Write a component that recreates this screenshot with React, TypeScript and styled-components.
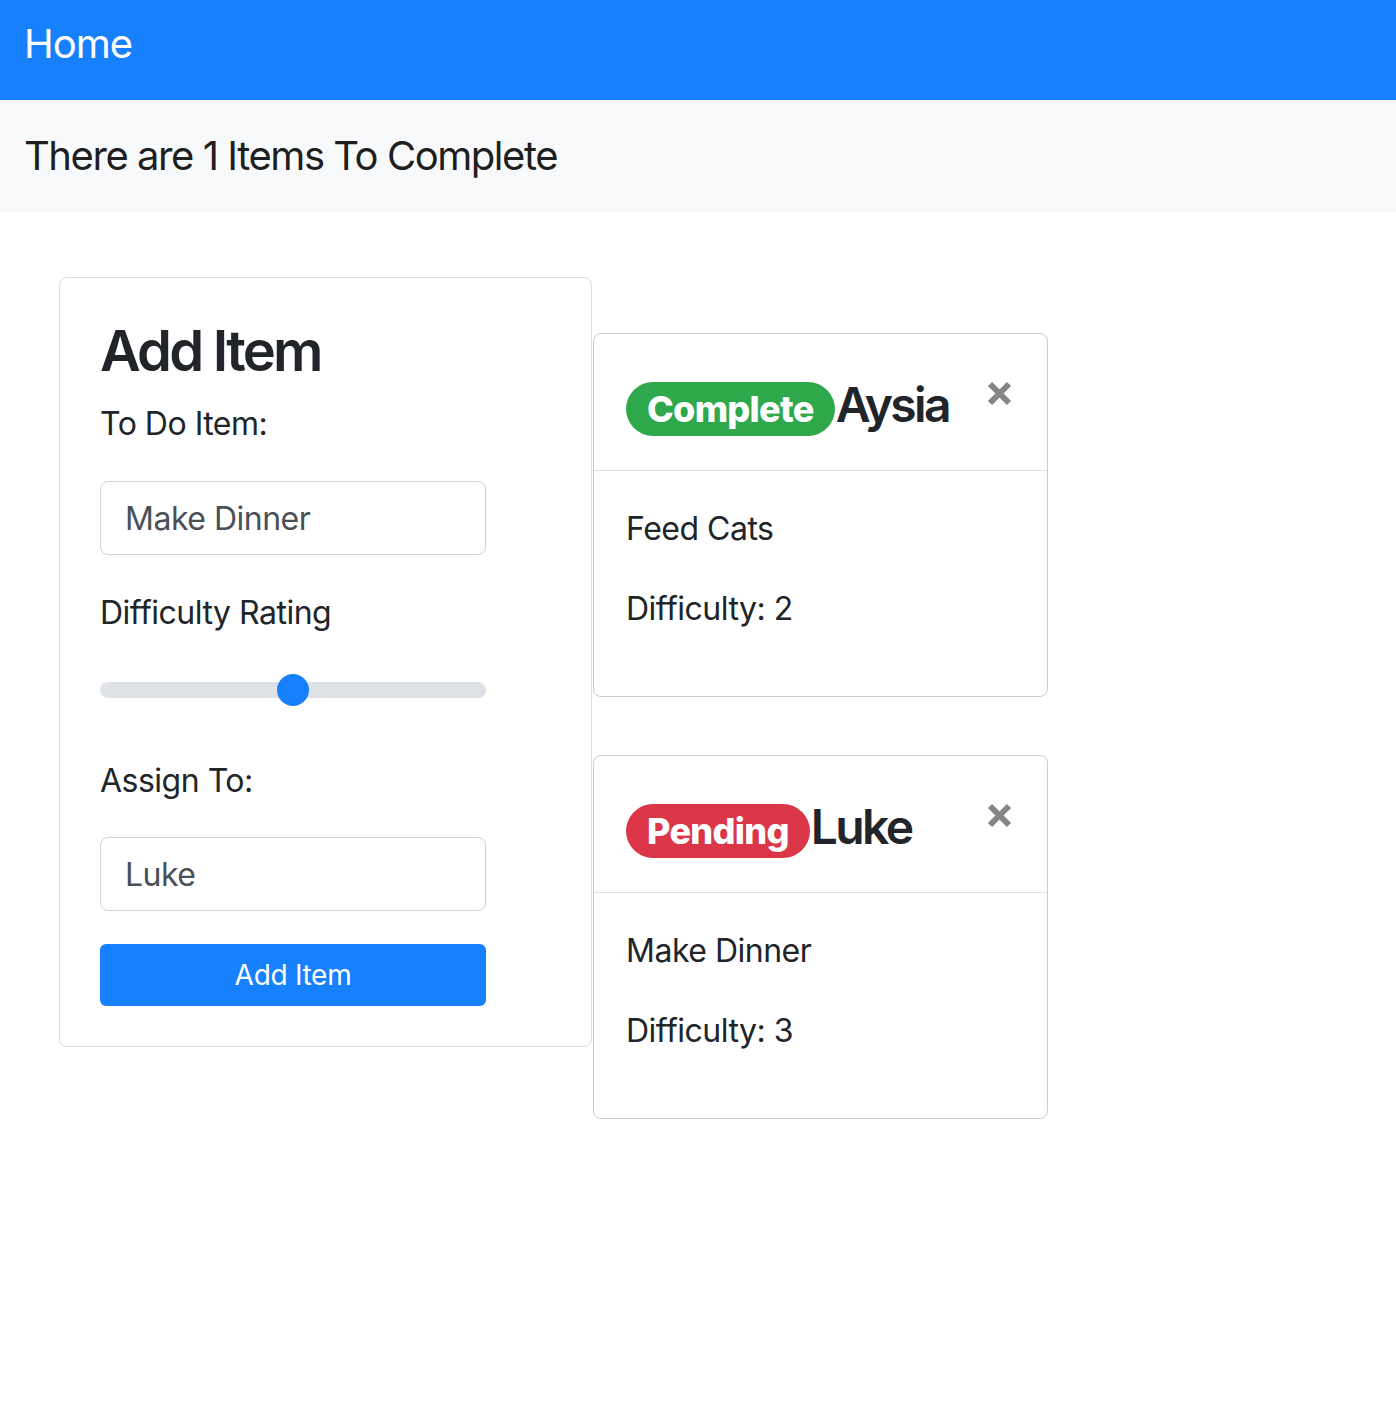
import React from "react";
import styled, { createGlobalStyle } from "styled-components";

const Global = createGlobalStyle`
  html, body { margin: 0; padding: 0; background: #fff; }
  body {
    font-family: Inter, "Noto Sans", "Liberation Sans", sans-serif;
    color: #212529;
    font-size: 32px;
    line-height: 1.5;
  }
  * { box-sizing: border-box; }
`;

const NavBar = styled.header`
  height: 100px;
  background: #1780fd;
  display: flex;
  align-items: center;
  padding: 0 24px;
`;

const Brand = styled.a`
  color: #fff;
  font-size: 40px;
  line-height: 1;
  letter-spacing: -1px;
  text-decoration: none;
  margin-top: -13px;
`;

const StatusBar = styled.div`
  height: 112px;
  background: #f8f9fa;
  display: flex;
  align-items: center;
  padding: 0 24px;
`;

const StatusText = styled.span`
  font-size: 40px;
  line-height: 1;
  letter-spacing: -1.45px;
  color: rgba(0, 0, 0, 0.9);
`;

const Main = styled.main`
  display: flex;
  align-items: flex-start;
  padding: 65px 0 0 59px;
`;

const FormCard = styled.section`
  width: 533px;
  border: 1px solid #dcdcdc;
  border-radius: 8px;
  padding: 40px;
  display: flex;
  flex-direction: column;
`;

const Heading = styled.h3`
  margin: 0 0 15px;
  font-size: 56px;
  font-weight: 600;
  line-height: 1.2;
  letter-spacing: -2.8px;
`;

const Label = styled.label<{ $gap?: number }>`
  display: block;
  font-size: 32px;
  line-height: 48px;
  letter-spacing: -0.5px;
  margin-bottom: ${(p) => p.$gap ?? 33}px;
`;

const TextInput = styled.input<{ $gap?: number }>`
  width: 386px;
  height: 74px;
  padding: 0 24px;
  border: 1px solid #ced4da;
  border-radius: 8px;
  font-family: inherit;
  font-size: 32px;
  letter-spacing: -0.5px;
  color: #495057;
  background: #fff;
  outline: none;
  margin-bottom: ${(p) => p.$gap ?? 0}px;
`;

const Range = styled.input`
  -webkit-appearance: none;
  appearance: none;
  width: 386px;
  height: 48px;
  margin: 29px 0 43px;
  padding: 0;
  background: transparent;
  outline: none;

  &::-webkit-slider-runnable-track {
    height: 16px;
    background: #dee2e6;
    border-radius: 16px;
  }
  &::-webkit-slider-thumb {
    -webkit-appearance: none;
    appearance: none;
    width: 32px;
    height: 32px;
    margin-top: -8px;
    border-radius: 50%;
    background: #1780fd;
    border: 0;
  }
`;

const SubmitButton = styled.button`
  width: 386px;
  height: 62px;
  border: 0;
  border-radius: 6px;
  background: #1780fd;
  color: #fff;
  font-family: inherit;
  font-size: 28px;
  letter-spacing: -0.3px;
  display: flex;
  align-items: center;
  justify-content: center;
`;

const List = styled.div`
  display: flex;
  flex-direction: column;
  gap: 58px;
  padding-top: 56px;
  margin-left: 1px;
`;

const ItemCard = styled.article`
  width: 455px;
  border: 1px solid #cccccc;
  border-radius: 8px;
  overflow: hidden;
`;

const CardHeader = styled.div`
  display: flex;
  justify-content: space-between;
  align-items: flex-start;
  padding: 47px 35px 35px 32px;
  border-bottom: 1px solid #dee2e6;
`;

const Title = styled.div`
  display: flex;
  align-items: baseline;
  height: 54px;
`;

const Badge = styled.span<{ $color: string }>`
  display: inline-block;
  background: ${(p) => p.$color};
  color: #fff;
  font-size: 36px;
  font-weight: 800;
  line-height: 1;
  letter-spacing: -0.7px;
  padding: 9px 21px;
  border-radius: 100px;
`;

const Name = styled.span`
  font-size: 48px;
  font-weight: 600;
  line-height: 1;
  letter-spacing: -2.6px;
  margin-left: 1px;
  color: #212529;
`;

const CloseButton = styled.button`
  border: 0;
  background: transparent;
  padding: 0;
  width: 25px;
  height: 25px;
  display: flex;
  cursor: pointer;
`;

const CardBody = styled.div`
  padding: 34px 32px 31px;
`;

const Line = styled.p`
  margin: 0 0 32px;
  font-size: 32px;
  line-height: 48px;
  letter-spacing: -0.5px;
`;

const CloseIcon = () => (
  <svg width="25" height="25" viewBox="0 0 25 25" aria-hidden="true">
    <path
      d="M3 3 L22 22 M22 3 L3 22"
      stroke="#858585"
      strokeWidth="6"
      strokeLinecap="butt"
    />
  </svg>
);

type Item = {
  id: number;
  status: "Complete" | "Pending";
  assignee: string;
  text: string;
  difficulty: number;
};

const items: Item[] = [
  { id: 1, status: "Complete", assignee: "Aysia", text: "Feed Cats", difficulty: 2 },
  { id: 2, status: "Pending", assignee: "Luke", text: "Make Dinner", difficulty: 3 },
];

const statusColor = (s: Item["status"]) => (s === "Complete" ? "#2fa84b" : "#db3648");

export default function App() {
  return (
    <>
      <Global />
      <NavBar>
        <Brand href="#">Home</Brand>
      </NavBar>
      <StatusBar>
        <StatusText>There are 1 Items To Complete</StatusText>
      </StatusBar>
      <Main>
        <FormCard as="form" onSubmit={(e: React.FormEvent) => e.preventDefault()}>
          <Heading>Add Item</Heading>
          <Label>To Do Item:</Label>
          <TextInput defaultValue="Make Dinner" $gap={34} />
          <Label $gap={0}>Difficulty Rating</Label>
          <Range type="range" min={1} max={5} defaultValue={3} />
          <Label $gap={32}>Assign To:</Label>
          <TextInput defaultValue="Luke" $gap={33} />
          <SubmitButton type="submit">Add Item</SubmitButton>
        </FormCard>
        <List>
          {items.map((it) => (
            <ItemCard key={it.id}>
              <CardHeader>
                <Title>
                  <Badge $color={statusColor(it.status)}>{it.status}</Badge>
                  <Name>{it.assignee}</Name>
                </Title>
                <CloseButton aria-label="Close">
                  <CloseIcon />
                </CloseButton>
              </CardHeader>
              <CardBody>
                <Line>{it.text}</Line>
                <Line>Difficulty: {it.difficulty}</Line>
              </CardBody>
            </ItemCard>
          ))}
        </List>
      </Main>
    </>
  );
}
